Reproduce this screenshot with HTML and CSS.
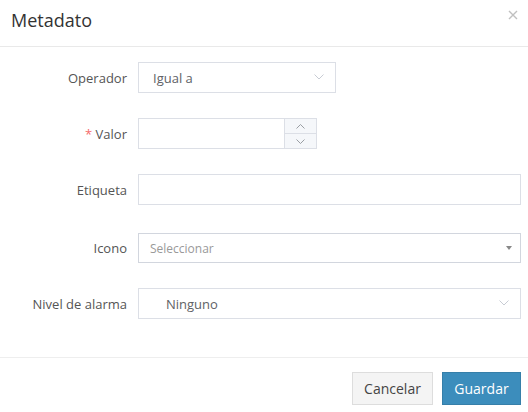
FILE: index.html
```html
<!DOCTYPE html>
<html>
<head>
<meta charset="utf-8">
<link rel="stylesheet" href="styles.css">
</head>
<body>
<div class="modal">
  <div class="modal-header">
    <h4 class="modal-title">Metadato</h4>
    <span class="close">
      <svg width="10" height="10" viewBox="0 0 10 10"><path d="M1 1L9 9M9 1L1 9" stroke="#c0c0c0" stroke-width="1.4" fill="none"/></svg>
    </span>
  </div>
  <div class="modal-body">
    <div class="row r1">
      <label class="lbl">Operador</label>
      <div class="ctl sel narrow">
        <span class="val op">Igual a</span>
        <svg class="chev" width="10" height="6" viewBox="0 0 10 6"><path d="M0.5 0.5L5 5L9.5 0.5" stroke="#c8ccd4" stroke-width="1" fill="none"/></svg>
      </div>
    </div>
    <div class="row r2">
      <label class="lbl"><span class="req">*</span> Valor</label>
      <div class="ctl num">
        <div class="num-in"></div>
        <div class="spin">
          <div class="sp up"><svg width="9" height="5" viewBox="0 0 9 5"><path d="M0.5 4.5L4.5 0.5L8.5 4.5" stroke="#909399" stroke-width="0.9" fill="none"/></svg></div>
          <div class="sp"><svg width="9" height="5" viewBox="0 0 9 5"><path d="M0.5 0.5L4.5 4.5L8.5 0.5" stroke="#909399" stroke-width="0.9" fill="none"/></svg></div>
        </div>
      </div>
    </div>
    <div class="row r3">
      <label class="lbl">Etiqueta</label>
      <div class="ctl wide"></div>
    </div>
    <div class="row r4">
      <label class="lbl">Icono</label>
      <div class="ctl wide sel2">
        <span class="ph">Seleccionar</span>
        <span class="tri"></span>
      </div>
    </div>
    <div class="row r5">
      <label class="lbl">Nivel de alarma</label>
      <div class="ctl wide sel">
        <span class="val ning">Ninguno</span>
        <svg class="chev" width="10" height="6" viewBox="0 0 10 6"><path d="M0.5 0.5L5 5L9.5 0.5" stroke="#c8ccd4" stroke-width="1" fill="none"/></svg>
      </div>
    </div>
  </div>
  <div class="modal-footer">
    <button class="btn btn-default">Cancelar</button>
    <button class="btn btn-primary">Guardar</button>
  </div>
</div>
</body>
</html>
```

FILE: styles.css
```css
* { box-sizing: border-box; }
html, body { margin: 0; padding: 0; background: #fff; }
body { font-family: "Open Sans", "Noto Sans", sans-serif; color: #333; width: 528px; height: 412px; overflow: hidden; }
.modal { width: 528px; }
.modal-header {
  height: 47px;
  border-bottom: 1px solid #e9e9e9;
  display: flex;
  justify-content: space-between;
  align-items: flex-start;
  padding: 0 8px 0 11px;
}
.modal-title { margin: 0; font-weight: 400; font-size: 18px; line-height: 24px; padding-top: 8px; color: #333; }
.close { padding-top: 10px; padding-right: 2px; display: flex; }
.modal-body { padding: 15px 7px 0 0; height: 310px; }
.row { display: flex; align-items: center; height: 31px; }
.r2 { margin-top: 25px; }
.r3 { margin-top: 25px; }
.r4 { margin-top: 28px; height: 30px; }
.r5 { margin-top: 25px; }
.lbl { width: 127px; text-align: right; font-size: 13px; color: #555; padding-right: 0; margin-right: 11px; }
.req { color: #f56c6c; }
.ctl { height: 100%; border: 1px solid #dcdfe6; background: #fff; position: relative; display: flex; align-items: center; }
.narrow { width: 198px; }
.wide { flex: 1; }
.val { font-size: 13px; color: #606266; }
.op { padding-left: 14px; }
.ning { padding-left: 27px; }
.chev { position: absolute; right: 11px; top: 11px; }
.num { width: 179px; padding: 0; align-items: stretch; }
.num-in { flex: 1; }
.spin { width: 32px; border-left: 1px solid #dcdfe6; display: flex; flex-direction: column; background: #f5f7fa; }
.sp { flex: 1; display: flex; align-items: center; justify-content: center; }
.sp.up { border-bottom: 1px solid #dcdfe6; }
.sel2 { border-color: #d2d6de; }
.ph { font-size: 12px; color: #999; padding-left: 11px; }
.tri { position: absolute; right: 8px; top: 12px; width: 0; height: 0; border-left: 3px solid transparent; border-right: 3px solid transparent; border-top: 4px solid #888; }
.modal-footer {
  border-top: 1px solid #eeeeee;
  padding: 14px 7px 0 0;
  display: flex;
  justify-content: flex-end;
  gap: 9px;
}
.btn { font-family: "Open Sans", "Noto Sans", sans-serif; font-size: 14px; height: 33px; padding: 0 11px; border: 1px solid; border-radius: 0; line-height: 31px; }
.btn-default { background: #f4f4f4; border-color: #ddd; color: #444; width: 81px; }
.btn-primary { background: #3c8dbc; border-color: #367fa9; color: #fff; width: 79px; }
```
